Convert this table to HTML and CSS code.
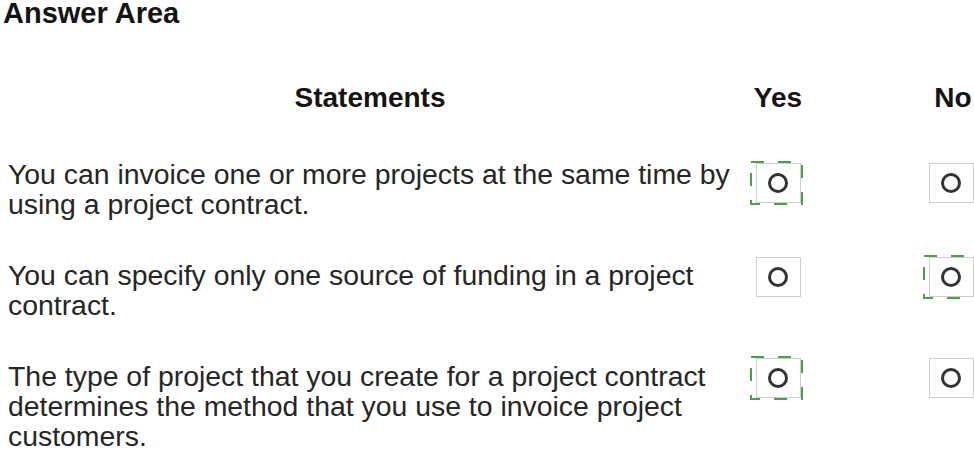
FILE: index.html
```html
<!DOCTYPE html>
<html>
<head>
<meta charset="utf-8">
<link rel="stylesheet" href="styles.css">
</head>
<body>
<h1 class="title">Answer Area</h1>
<div class="head">
  <div class="h-stmt">Statements</div>
  <div class="h-yes">Yes</div>
  <div class="h-no">No</div>
</div>
<div class="rows">
  <div class="row row--first">
    <div class="stmt">You can invoice one or more projects at the same time by using a project contract.</div>
    <div class="cell yes"><span class="opt selected"><span class="dot"></span><svg class="dash" viewBox="0 0 53 44" preserveAspectRatio="none"><rect x="1" y="1" width="51" height="42"/></svg></span></div>
    <div class="cell no"><span class="opt"><span class="dot"></span></span></div>
  </div>
  <div class="row">
    <div class="stmt">You can specify only one source of funding in a project contract.</div>
    <div class="cell yes"><span class="opt"><span class="dot"></span></span></div>
    <div class="cell no"><span class="opt selected"><span class="dot"></span><svg class="dash" viewBox="0 0 53 44" preserveAspectRatio="none"><rect x="1" y="1" width="51" height="42"/></svg></span></div>
  </div>
  <div class="row">
    <div class="stmt">The type of project that you create for a project contract determines the method that you use to invoice project customers.</div>
    <div class="cell yes"><span class="opt selected"><span class="dot"></span><svg class="dash" viewBox="0 0 53 44" preserveAspectRatio="none"><rect x="1" y="1" width="51" height="42"/></svg></span></div>
    <div class="cell no"><span class="opt"><span class="dot"></span></span></div>
  </div>
</div>
</body>
</html>
```
FILE: styles.css
```css
html, body {
  margin: 0;
  padding: 0;
  background: #fff;
}
body {
  width: 974px;
  height: 452px;
  overflow: hidden;
  padding: 0 0 0 8px;
  box-sizing: border-box;
  font-family: "Liberation Sans", Arial, sans-serif;
  color: #262626;
}
.title {
  margin: 0 0 0 -5px;
  font-size: 29px;
  line-height: 26px;
  font-weight: bold;
  color: #141414;
}
.head {
  display: flex;
  margin-top: 57px;
  font-size: 28px;
  line-height: 30px;
  font-weight: bold;
  color: #141414;
}
.h-stmt {
  width: 724px;
  padding-right: 16px;
  text-align: center;
}
.h-yes {
  width: 60px;
  text-align: center;
}
.h-no {
  margin-left: auto;
  width: 42px;
  text-align: center;
}
.rows {
  display: flex;
  flex-direction: column;
  gap: 41px;
  margin-top: 46px;
}
.row {
  display: flex;
  align-items: flex-start;
}
.stmt {
  width: 740px;
  font-size: 28.4px;
  line-height: 30px;
}
.cell {
  display: flex;
  justify-content: center;
}
.yes {
  width: 60px;
}
.no {
  margin-left: auto;
  width: 46px;
}
.opt {
  position: relative;
  display: flex;
  align-items: center;
  justify-content: center;
  width: 45px;
  height: 40px;
  box-sizing: border-box;
  border: 1px solid #cfcfcf;
  background: #fff;
  margin-top: -3px;
}
.row--first .opt {
  margin-top: 4px;
}
.dot {
  width: 20px;
  height: 20px;
  border: 3px solid #333;
  border-radius: 50%;
  box-sizing: border-box;
}
.dash {
  position: absolute;
  left: -7px;
  top: -3px;
  width: 53px;
  height: 44px;
  overflow: visible;
}
.dash rect {
  fill: none;
  stroke: #4e9e4e;
  stroke-width: 2;
  stroke-dasharray: 13 14;
}
```
